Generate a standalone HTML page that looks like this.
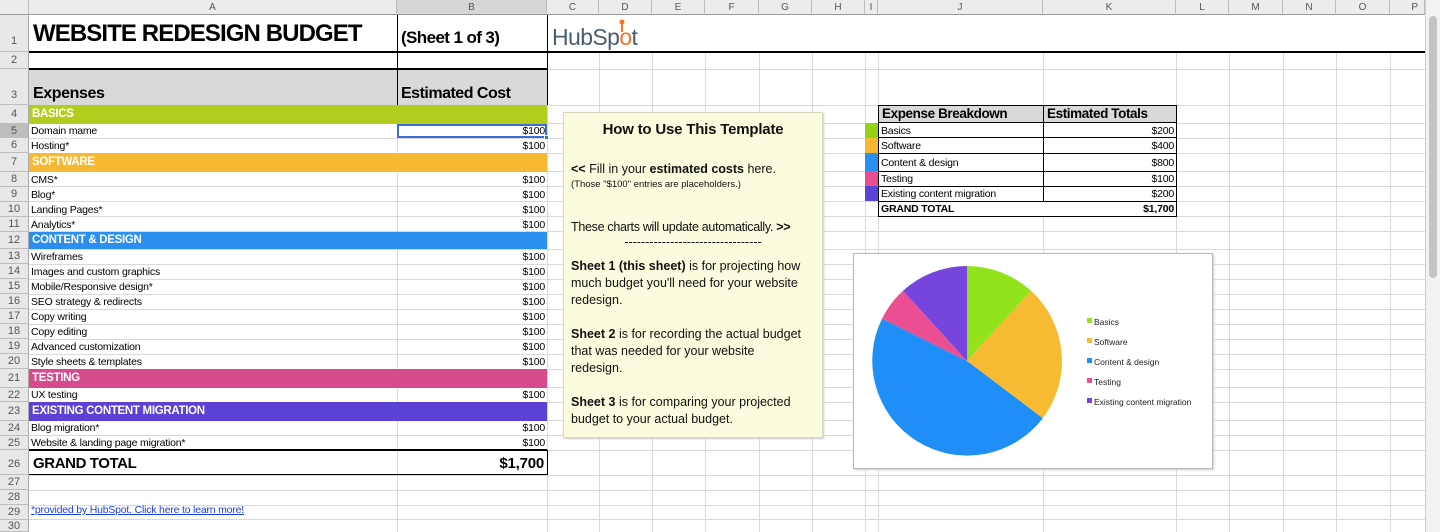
<!DOCTYPE html>
<html><head><meta charset="utf-8"><style>
*{margin:0;padding:0;box-sizing:border-box}
body{width:1440px;height:532px;overflow:hidden;background:#fff;font-family:"Liberation Sans",sans-serif;position:relative}
.a{position:absolute}
.h{position:absolute;left:0;width:1425px;height:1px;background:#d9d9d9}
.v{position:absolute;top:0;width:1px;height:532px;background:#d9d9d9}
.rh{position:absolute;left:0;width:29px;background:#e8e8e8;border-bottom:1px solid #bdbdbd;border-right:1px solid #aaa;font-size:11px;color:#555;text-align:center}
.ch{position:absolute;top:0;height:15px;background:#ececec;border-right:1px solid #bdbdbd;border-bottom:1px solid #999;font-size:10px;color:#555;text-align:center;line-height:15px}
.t{position:absolute;font-size:10.5px;color:#000;white-space:nowrap;letter-spacing:-0.2px}
.r{text-align:right}
.bar{position:absolute;left:29px;width:518px;color:#fff;font-weight:bold;font-size:11.5px;padding-left:3px;letter-spacing:-0.3px}
</style></head><body>
<div class="v" style="left:397px"></div><div class="v" style="left:547px"></div><div class="v" style="left:599px"></div><div class="v" style="left:652px"></div><div class="v" style="left:705px"></div><div class="v" style="left:759px"></div><div class="v" style="left:812px"></div><div class="v" style="left:865px"></div><div class="v" style="left:878px"></div><div class="v" style="left:1043px"></div><div class="v" style="left:1176px"></div><div class="v" style="left:1229px"></div><div class="v" style="left:1283px"></div><div class="v" style="left:1336px"></div><div class="v" style="left:1390px"></div>
<div class="h" style="top:69px"></div><div class="h" style="top:105px"></div><div class="h" style="top:123px"></div><div class="h" style="top:138px"></div><div class="h" style="top:153px"></div><div class="h" style="top:171px"></div><div class="h" style="top:186px"></div><div class="h" style="top:201px"></div><div class="h" style="top:216px"></div><div class="h" style="top:231px"></div><div class="h" style="top:249px"></div><div class="h" style="top:264px"></div><div class="h" style="top:279px"></div><div class="h" style="top:294px"></div><div class="h" style="top:309px"></div><div class="h" style="top:324px"></div><div class="h" style="top:339px"></div><div class="h" style="top:354px"></div><div class="h" style="top:369px"></div><div class="h" style="top:387px"></div><div class="h" style="top:402px"></div><div class="h" style="top:420px"></div><div class="h" style="top:435px"></div><div class="h" style="top:450px"></div><div class="h" style="top:475px"></div><div class="h" style="top:490px"></div><div class="h" style="top:505px"></div><div class="h" style="top:519px"></div>
<div class="ch" style="left:0;width:29px"></div>
<div class="ch" style="left:29px;width:368px">A</div>
<div class="ch" style="left:397px;width:150px;background:#d6d6d6">B</div>
<div class="ch" style="left:547px;width:52px">C</div><div class="ch" style="left:599px;width:53px">D</div><div class="ch" style="left:652px;width:53px">E</div><div class="ch" style="left:705px;width:54px">F</div><div class="ch" style="left:759px;width:53px">G</div><div class="ch" style="left:812px;width:53px">H</div><div class="ch" style="left:865px;width:13px">I</div><div class="ch" style="left:878px;width:165px">J</div><div class="ch" style="left:1043px;width:133px">K</div><div class="ch" style="left:1176px;width:53px">L</div><div class="ch" style="left:1229px;width:54px">M</div><div class="ch" style="left:1283px;width:53px">N</div><div class="ch" style="left:1336px;width:54px">O</div><div class="ch" style="left:1390px;width:35px;text-align:right;padding-right:6px">P</div>
<div class="a" style="left:1425px;top:0;width:15px;height:532px;background:#f2f2f2;border-left:1px solid #ccc"></div>
<div class="a" style="left:1429px;top:16px;width:8px;height:262px;background:#c4c4c4;border-radius:4px"></div>
<div class="rh" style="top:15px;height:37px;line-height:52px">1</div>
<div class="rh" style="top:52px;height:17px;line-height:17px">2</div>
<div class="rh" style="top:69px;height:36px;line-height:52px">3</div>
<div class="rh" style="top:105px;height:19px;line-height:19px">4</div>
<div class="rh" style="top:124px;height:14px;line-height:14px;background:#bdbdbd">5</div>
<div class="rh" style="top:138px;height:15px;line-height:15px">6</div>
<div class="rh" style="top:153px;height:19px;line-height:19px">7</div>
<div class="rh" style="top:172px;height:15px;line-height:15px">8</div>
<div class="rh" style="top:187px;height:15px;line-height:15px">9</div>
<div class="rh" style="top:202px;height:15px;line-height:15px">10</div>
<div class="rh" style="top:217px;height:15px;line-height:15px">11</div>
<div class="rh" style="top:232px;height:17px;line-height:17px">12</div>
<div class="rh" style="top:249px;height:15px;line-height:15px">13</div>
<div class="rh" style="top:264px;height:15px;line-height:15px">14</div>
<div class="rh" style="top:279px;height:15px;line-height:15px">15</div>
<div class="rh" style="top:294px;height:15px;line-height:15px">16</div>
<div class="rh" style="top:309px;height:15px;line-height:15px">17</div>
<div class="rh" style="top:324px;height:15px;line-height:15px">18</div>
<div class="rh" style="top:339px;height:15px;line-height:15px">19</div>
<div class="rh" style="top:354px;height:15px;line-height:15px">20</div>
<div class="rh" style="top:369px;height:19px;line-height:19px">21</div>
<div class="rh" style="top:388px;height:14px;line-height:14px">22</div>
<div class="rh" style="top:402px;height:19px;line-height:19px">23</div>
<div class="rh" style="top:421px;height:15px;line-height:15px">24</div>
<div class="rh" style="top:436px;height:14px;line-height:14px">25</div>
<div class="rh" style="top:450px;height:25px;line-height:28px">26</div>
<div class="rh" style="top:475px;height:15px;line-height:15px">27</div>
<div class="rh" style="top:490px;height:15px;line-height:15px">28</div>
<div class="rh" style="top:505px;height:15px;line-height:15px">29</div>
<div class="rh" style="top:520px;height:12px;line-height:12px">30</div>

<div class="a" style="left:29px;top:15px;width:1396px;height:38px;background:#fff;border-bottom:2px solid #000"></div>
<div class="a" style="left:397px;top:15px;width:1px;height:54px;background:#000"></div>
<div class="t" style="left:33px;top:20px;font-size:24px;font-weight:bold;letter-spacing:-0.9px">WEBSITE REDESIGN BUDGET</div>
<div class="t" style="left:401px;top:28px;font-size:17px;font-weight:bold;letter-spacing:-0.6px">(Sheet 1 of 3)</div>
<div class="t" style="left:552px;top:24px;font-size:23px;color:#4a5d6e;letter-spacing:-0.6px">HubSp<span style="color:#f47622">o</span>t</div>
<svg class="a" style="left:610px;top:18px" width="30" height="34"><circle cx="12" cy="4" r="2.5" fill="#f47622"/><line x1="12" y1="4" x2="12" y2="14" stroke="#f47622" stroke-width="2"/></svg>
<div class="a" style="left:29px;top:68px;width:518px;height:2px;background:#000"></div>
<div class="a" style="left:29px;top:53px;width:518px;height:15px;background:#fff"></div>
<div class="a" style="left:397px;top:53px;width:1px;height:16px;background:#000"></div>
<div class="a" style="left:547px;top:15px;width:1px;height:90px;background:#000"></div>
<div class="a" style="left:29px;top:70px;width:518px;height:35px;background:#d9d9d9"></div>
<div class="a" style="left:397px;top:70px;width:1px;height:35px;background:#000"></div>
<div class="t" style="left:33px;top:85px;font-size:16px;font-weight:bold;letter-spacing:-0.4px">Expenses</div>
<div class="t" style="left:401px;top:85px;font-size:16px;font-weight:bold;letter-spacing:-0.5px">Estimated Cost</div>
<div class="bar" style="top:105px;height:19px;line-height:19px;background:#b3cd1f">BASICS</div>
<div class="bar" style="top:153px;height:19px;line-height:19px;background:#f7b932">SOFTWARE</div>
<div class="bar" style="top:232px;height:17px;line-height:17px;background:#2a8fef">CONTENT &amp; DESIGN</div>
<div class="bar" style="top:369px;height:19px;line-height:19px;background:#d64b8c">TESTING</div>
<div class="bar" style="top:402px;height:19px;line-height:19px;background:#5b41d4">EXISTING CONTENT MIGRATION</div>
<div class="t" style="left:31px;top:125px">Domain mame</div><div class="t r" style="left:400px;width:145px;top:125px">$100</div>
<div class="t" style="left:31px;top:140px">Hosting*</div><div class="t r" style="left:400px;width:145px;top:140px">$100</div>
<div class="t" style="left:31px;top:174px">CMS*</div><div class="t r" style="left:400px;width:145px;top:174px">$100</div>
<div class="t" style="left:31px;top:189px">Blog*</div><div class="t r" style="left:400px;width:145px;top:189px">$100</div>
<div class="t" style="left:31px;top:204px">Landing Pages*</div><div class="t r" style="left:400px;width:145px;top:204px">$100</div>
<div class="t" style="left:31px;top:219px">Analytics*</div><div class="t r" style="left:400px;width:145px;top:219px">$100</div>
<div class="t" style="left:31px;top:251px">Wireframes</div><div class="t r" style="left:400px;width:145px;top:251px">$100</div>
<div class="t" style="left:31px;top:266px">Images and custom graphics</div><div class="t r" style="left:400px;width:145px;top:266px">$100</div>
<div class="t" style="left:31px;top:281px">Mobile/Responsive design*</div><div class="t r" style="left:400px;width:145px;top:281px">$100</div>
<div class="t" style="left:31px;top:296px">SEO strategy &amp; redirects</div><div class="t r" style="left:400px;width:145px;top:296px">$100</div>
<div class="t" style="left:31px;top:311px">Copy writing</div><div class="t r" style="left:400px;width:145px;top:311px">$100</div>
<div class="t" style="left:31px;top:326px">Copy editing</div><div class="t r" style="left:400px;width:145px;top:326px">$100</div>
<div class="t" style="left:31px;top:341px">Advanced customization</div><div class="t r" style="left:400px;width:145px;top:341px">$100</div>
<div class="t" style="left:31px;top:356px">Style sheets &amp; templates</div><div class="t r" style="left:400px;width:145px;top:356px">$100</div>
<div class="t" style="left:31px;top:389px">UX testing</div><div class="t r" style="left:400px;width:145px;top:389px">$100</div>
<div class="t" style="left:31px;top:422px">Blog migration*</div><div class="t r" style="left:400px;width:145px;top:422px">$100</div>
<div class="t" style="left:31px;top:437px">Website &amp; landing page migration*</div><div class="t r" style="left:400px;width:145px;top:437px">$100</div>
<div class="a" style="left:397px;top:124px;width:150px;height:14px;border:2px solid #3b6fd6"></div>
<div class="a" style="left:544px;top:135px;width:5px;height:5px;background:#3b6fd6;border:1px solid #fff"></div>
<div class="a" style="left:29px;top:449px;width:518px;height:2px;background:#000"></div>
<div class="a" style="left:29px;top:474px;width:518px;height:1px;background:#000"></div>
<div class="a" style="left:547px;top:450px;width:1px;height:25px;background:#000"></div>
<div class="t" style="left:33px;top:455px;font-size:15px;font-weight:bold;letter-spacing:-0.4px">GRAND TOTAL</div>
<div class="t r" style="left:400px;width:144px;top:455px;font-size:15px;font-weight:bold">$1,700</div>
<div class="t" style="left:31px;top:504px;color:#1a3fe0;text-decoration:underline">*provided by HubSpot. Click here to learn more!</div>

<div class="a" style="left:563px;top:112px;width:260px;height:326px;background:#fbfbdd;border:1px solid #d8d8c0;box-shadow:1px 1px 2px #ccc;font-size:12.5px;color:#111;padding:8px 7px;line-height:17px;letter-spacing:0">
<div style="text-align:center;font-weight:bold;font-size:15px;margin-bottom:23px;letter-spacing:-0.2px">How to Use This Template</div>
<div><b>&lt;&lt;</b> Fill in your <b>estimated costs</b> here.</div>
<div style="font-size:9.5px;line-height:13px">(Those "$100" entries are placeholders.)</div>
<div style="margin-top:28px;white-space:nowrap;letter-spacing:-0.3px">These charts will update automatically. <b>&gt;&gt;</b></div>
<div style="text-align:center;line-height:12px">---------------------------------</div>
<div style="margin-top:10px;padding-right:6px"><b>Sheet 1 (this sheet)</b> is for projecting how much budget you'll need for your website redesign.</div>
<div style="margin-top:17px;padding-right:6px"><b>Sheet 2</b> is for recording the actual budget that was needed for your website redesign.</div>
<div style="margin-top:17px;padding-right:6px"><b>Sheet 3</b> is for comparing your projected budget to your actual budget.</div>
</div>

<div class="a" style="left:865px;top:123px;width:13px;height:15px;background:#93d314"></div>
<div class="a" style="left:865px;top:138px;width:13px;height:15px;background:#f7b932"></div>
<div class="a" style="left:865px;top:153px;width:13px;height:18px;background:#2a8fef"></div>
<div class="a" style="left:865px;top:171px;width:13px;height:15px;background:#e84d90"></div>
<div class="a" style="left:865px;top:186px;width:13px;height:15px;background:#5b41d4"></div>
<div class="a" style="left:878px;top:105px;width:299px;height:18px;background:#d9d9d9;border:1px solid #000"></div>
<div class="a" style="left:878px;top:122px;width:299px;height:80px;background:#fff;border:1px solid #000"></div>
<div class="a" style="left:878px;top:201px;width:299px;height:16px;background:#fff;border:1px solid #000"></div>
<div class="a" style="left:878px;top:137px;width:299px;height:1px;background:#000"></div>
<div class="a" style="left:878px;top:153px;width:299px;height:1px;background:#000"></div>
<div class="a" style="left:878px;top:171px;width:299px;height:1px;background:#000"></div>
<div class="a" style="left:878px;top:186px;width:299px;height:1px;background:#000"></div>
<div class="a" style="left:1043px;top:105px;width:1px;height:97px;background:#000"></div>
<div class="t" style="left:882px;top:106px;font-size:13.5px;font-weight:bold;letter-spacing:-0.4px">Expense Breakdown</div>
<div class="t" style="left:1047px;top:106px;font-size:13.5px;font-weight:bold;letter-spacing:-0.4px">Estimated Totals</div>
<div class="t" style="left:881px;top:125px">Basics</div><div class="t r" style="left:1046px;width:128px;top:125px">$200</div>
<div class="t" style="left:881px;top:140px">Software</div><div class="t r" style="left:1046px;width:128px;top:140px">$400</div>
<div class="t" style="left:881px;top:157px">Content &amp; design</div><div class="t r" style="left:1046px;width:128px;top:157px">$800</div>
<div class="t" style="left:881px;top:173px">Testing</div><div class="t r" style="left:1046px;width:128px;top:173px">$100</div>
<div class="t" style="left:881px;top:188px">Existing content migration</div><div class="t r" style="left:1046px;width:128px;top:188px">$200</div>
<div class="t" style="left:881px;top:203px;font-weight:bold">GRAND TOTAL</div><div class="t r" style="left:1046px;width:128px;top:203px;font-weight:bold">$1,700</div>

<div class="a" style="left:853px;top:253px;width:360px;height:216px;background:#fff;border:1px solid #bbb;box-shadow:1px 1px 2px #ccc"></div>
<svg class="a" style="left:0;top:0" width="1440" height="532">
<path d="M967 361 L967 266 A95 95 0 0 1 1031 290.8 Z" fill="#93e31c"/>
<path d="M967 361 L1031 290.8 A95 95 0 0 1 1042.8 418.2 Z" fill="#f7bb33"/>
<path d="M967 361 L1042.8 418.2 A95 95 0 0 1 882 318.7 Z" fill="#1f8ef7"/>
<path d="M967 361 L882 318.7 A95 95 0 0 1 903 290.8 Z" fill="#ea4f93"/>
<path d="M967 361 L903 290.8 A95 95 0 0 1 967 266 Z" fill="#7645dc"/>
<rect x="1087" y="318" width="5" height="5" fill="#93e31c"/>
<rect x="1087" y="338" width="5" height="5" fill="#f7bb33"/>
<rect x="1087" y="358" width="5" height="5" fill="#1f8ef7"/>
<rect x="1087" y="378" width="5" height="5" fill="#ea4f93"/>
<rect x="1087" y="398" width="5" height="5" fill="#7645dc"/>
<g font-family="Liberation Sans, sans-serif" font-size="8.5" fill="#222">
<text x="1094" y="325">Basics</text><text x="1094" y="345">Software</text><text x="1094" y="365">Content &amp; design</text><text x="1094" y="385">Testing</text><text x="1094" y="405">Existing content migration</text>
</g>
</svg>
</body></html>
